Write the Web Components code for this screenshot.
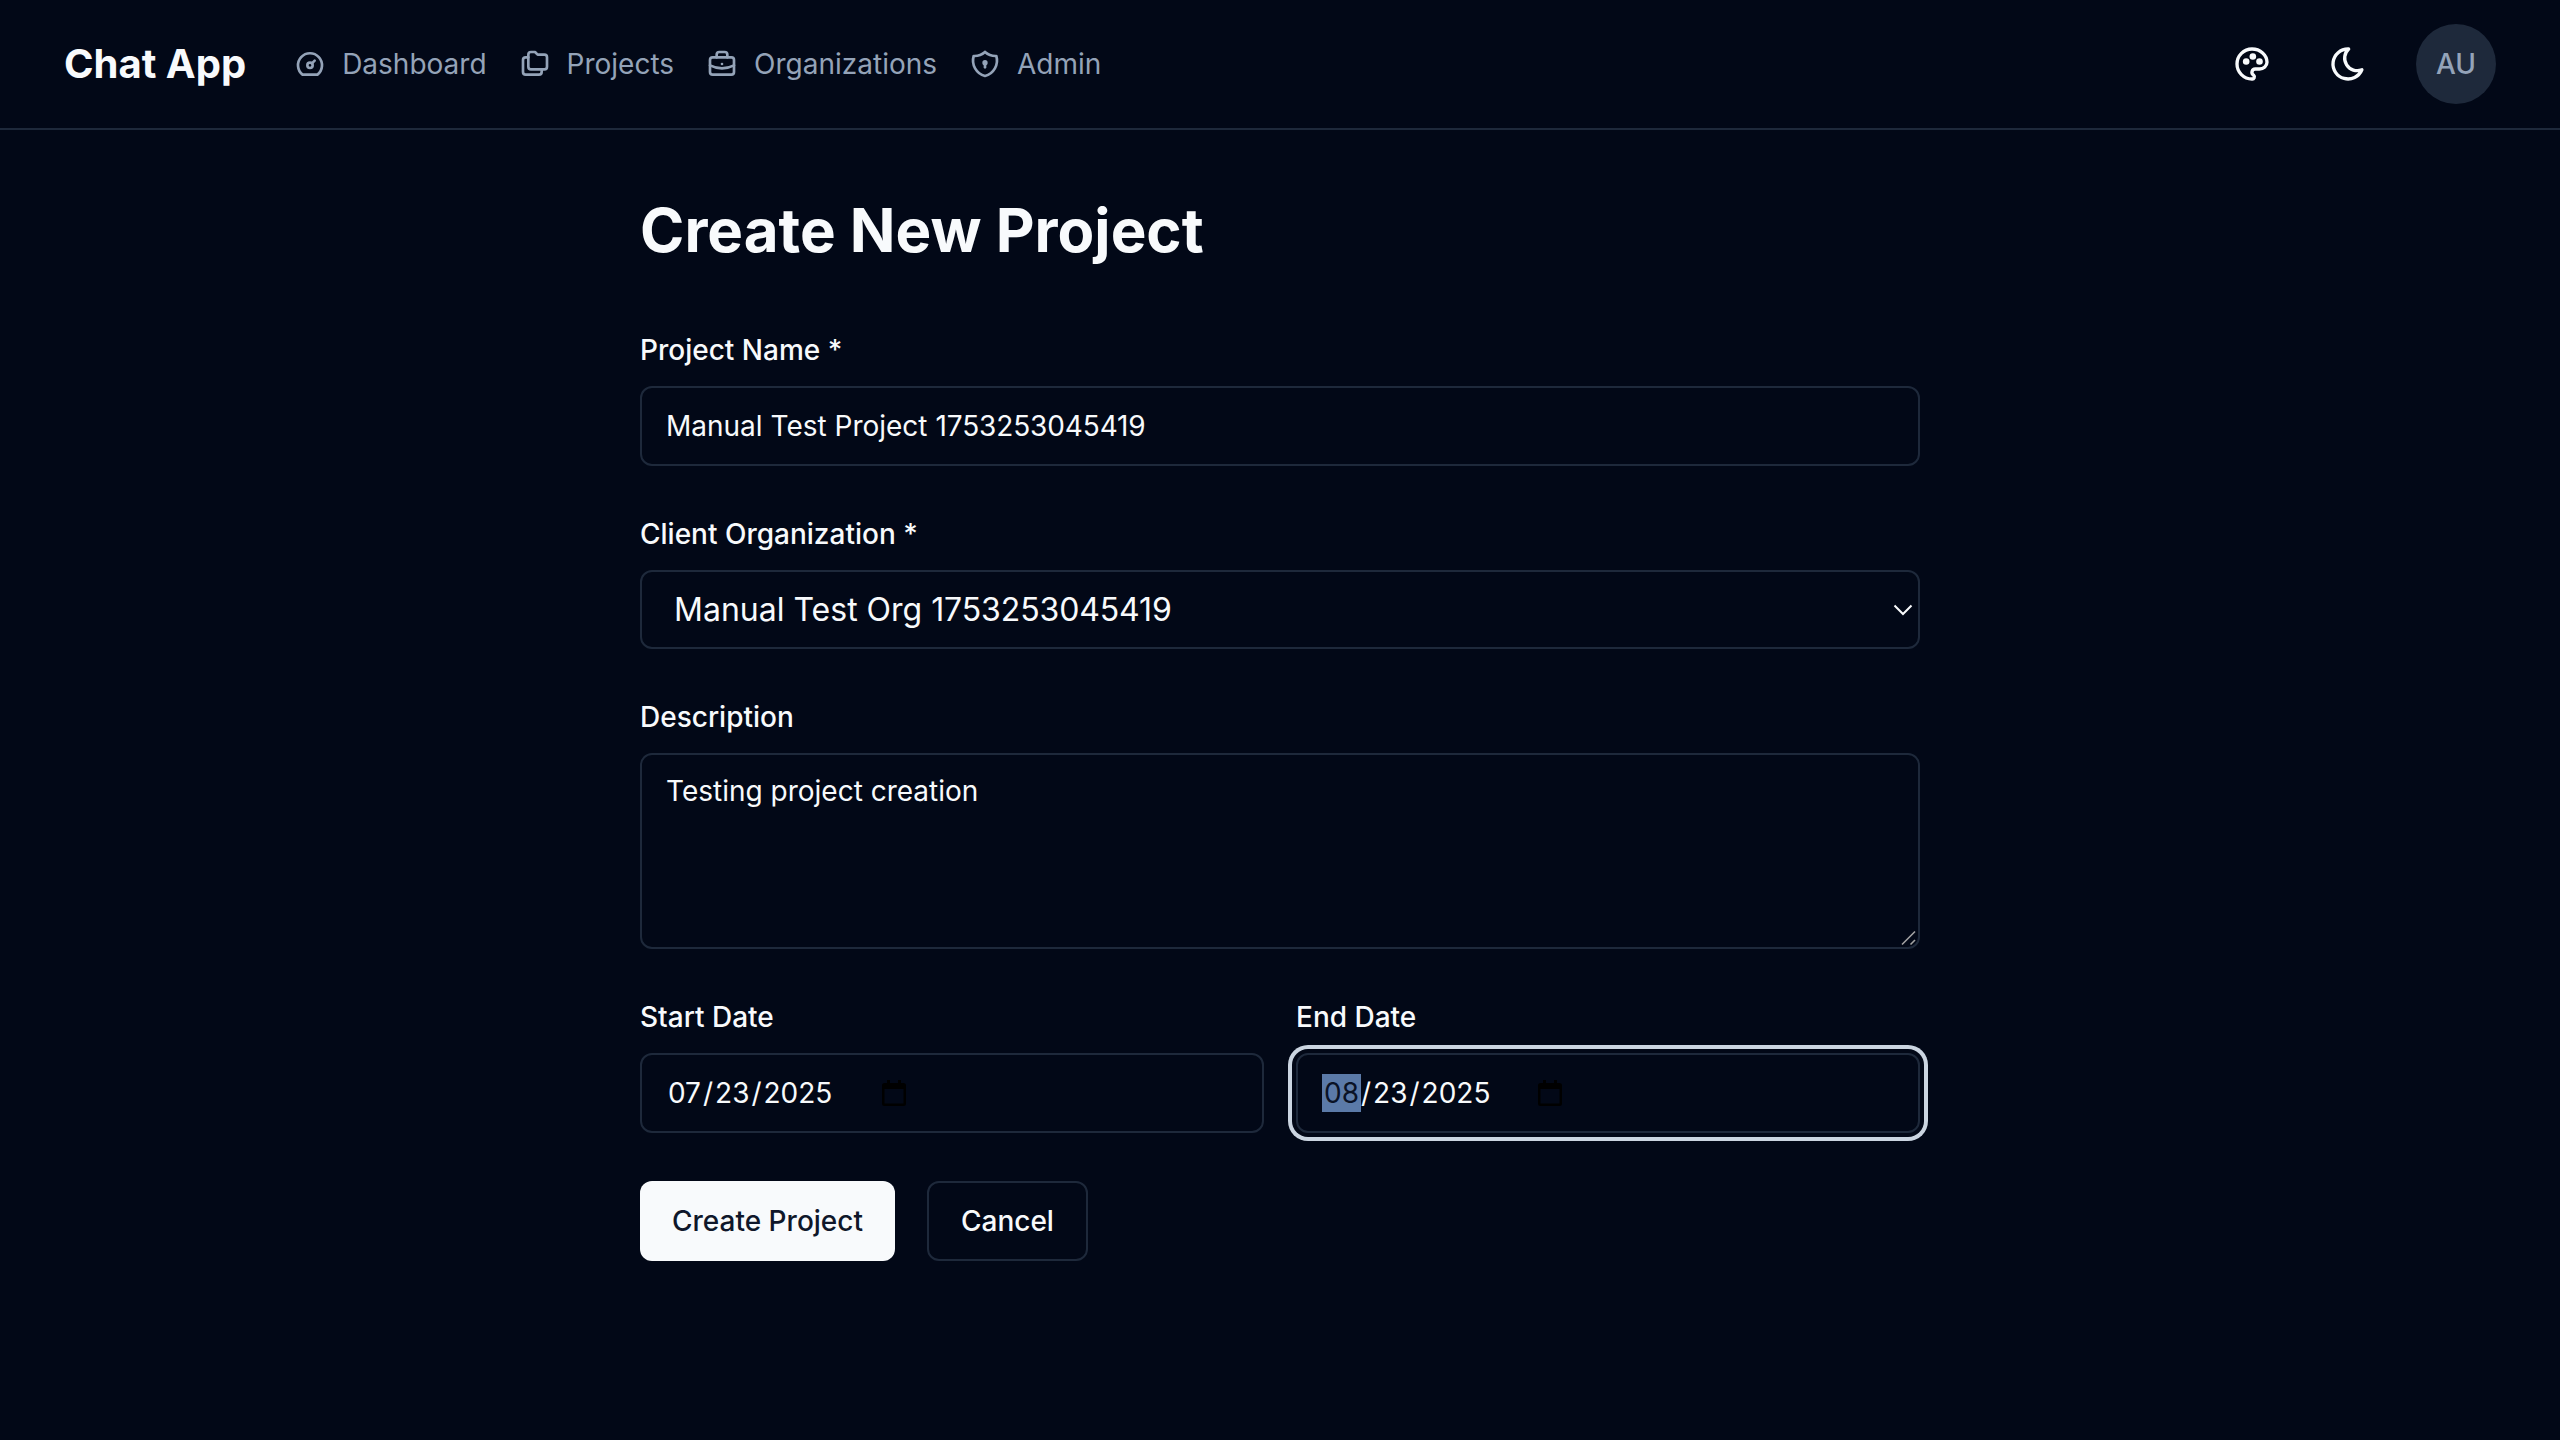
<!DOCTYPE html>
<html lang="en">
<head>
<meta charset="utf-8">
<title>Create New Project</title>
<style>
html,body{margin:0;padding:0;background:#020817;}
body{font-family:Inter,"Liberation Sans",sans-serif;color:#f8fafc;min-height:100vh;}
</style>
</head>
<body>
<chat-app>
  <app-header slot="header">
    <span slot="brand">Chat App</span>
    <nav-link icon="dashboard">Dashboard</nav-link>
    <nav-link icon="folders">Projects</nav-link>
    <nav-link icon="briefcase">Organizations</nav-link>
    <nav-link icon="shield">Admin</nav-link>
    <icon-button slot="tools" icon="palette"></icon-button>
    <icon-button slot="tools" icon="moon"></icon-button>
    <user-avatar slot="tools">AU</user-avatar>
  </app-header>
  <project-form>
    <form-field label="Project Name *"><text-box>Manual Test Project <span class="num">1753253045419</span></text-box></form-field>
    <form-field label="Client Organization *"><select-box><span>Manual Test Org <span style="letter-spacing:-.12px">1753253045419</span></span></select-box></form-field>
    <form-field label="Description"><area-box>Testing project creation</area-box></form-field>
    <date-row>
      <form-field label="Start Date"><date-box><span class="seg">07</span>/<span class="seg">23</span>/<span class="seg">2025</span></date-box></form-field>
      <form-field label="End Date"><date-box focused><span class="seg sel">08</span>/<span class="seg">23</span>/<span class="seg">2025</span></date-box></form-field>
    </date-row>
    <action-row>
      <action-button primary>Create Project</action-button>
      <action-button>Cancel</action-button>
    </action-row>
  </project-form>
</chat-app>
<script>
const ICONS={
 dashboard:'<path d="M10 13a2 2 0 1 0 4 0a2 2 0 1 0 -4 0"/><path d="M13.45 11.55l2.05 -2.05"/><path d="M6.4 20a9 9 0 1 1 11.2 0z"/>',
 folders:'<path d="M9 3h3l2 2h5a2 2 0 0 1 2 2v7a2 2 0 0 1 -2 2h-10a2 2 0 0 1 -2 -2v-9a2 2 0 0 1 2 -2"/><path d="M17 16v2a2 2 0 0 1 -2 2h-10a2 2 0 0 1 -2 -2v-9a2 2 0 0 1 2 -2h2"/>',
 briefcase:'<path d="M3 9a2 2 0 0 1 2 -2h14a2 2 0 0 1 2 2v9a2 2 0 0 1 -2 2h-14a2 2 0 0 1 -2 -2z"/><path d="M8 7v-2a2 2 0 0 1 2 -2h4a2 2 0 0 1 2 2v2"/><path d="M12 12v.01"/><path d="M3 13a20 20 0 0 0 18 0"/>',
 shield:'<path d="M12 3a12 12 0 0 0 8.5 3a12 12 0 0 1 -8.500 15a12 12 0 0 1 -8.500 -15a12 12 0 0 0 8.500 -3"/><path d="M11 11a1 1 0 1 0 2 0a1 1 0 1 0 -2 0"/><path d="M12 12v2.5"/>',
 palette:'<path d="M12 21a9 9 0 0 1 0 -18c4.97 0 9 3.582 9 8c0 1.06 -.474 2.078 -1.318 2.828c-.844 .75 -1.989 1.172 -3.182 1.172h-2.5a2 2 0 0 0 -1 3.75a1.3 1.3 0 0 1 -1 2.25"/><path d="M7.5 10.5a1 1 0 1 0 2 0a1 1 0 1 0 -2 0"/><path d="M11.5 7.5a1 1 0 1 0 2 0a1 1 0 1 0 -2 0"/><path d="M15.5 10.5a1 1 0 1 0 2 0a1 1 0 1 0 -2 0"/>',
 moon:'<path d="M12 3c.132 0 .263 0 .393 0a7.5 7.5 0 0 0 7.92 12.446a9 9 0 1 1 -8.313 -12.454z"/>'
};
function def(name,css,html){
  customElements.define(name,class extends HTMLElement{
    constructor(){super();const r=this.attachShadow({mode:'open'});
      r.innerHTML='<style>'+css+'</style>'+(typeof html==='function'?html(this):html);
    }
  });
}
const svg=(n,s)=>`<svg width="${s}" height="${s}" viewBox="0 0 24 24" fill="none" stroke="currentColor" stroke-width="2" stroke-linecap="round" stroke-linejoin="round" aria-hidden="true">${ICONS[n]}</svg>`;

def('chat-app',':host{display:block}','<slot name="header"></slot><slot></slot>');

def('app-header',`
:host{display:flex;align-items:center;height:128px;padding:0 64px;border-bottom:2px solid #1e293b;}
.brand{font-size:40px;line-height:56px;font-weight:700;color:#f8fafc;margin-right:48px;white-space:nowrap}
.nav{display:flex;align-items:center;gap:32px}
.tools{display:flex;align-items:center;margin-left:auto}
`,`<div class="brand"><slot name="brand"></slot></div><div class="nav"><slot></slot></div><div class="tools"><slot name="tools"></slot></div>`);

def('nav-link',`
:host{display:flex;align-items:center;gap:16px;color:#94a3b8;font-size:28px;line-height:40px;white-space:nowrap}
svg{display:block;flex:none}
`,el=>svg(el.getAttribute('icon'),32)+'<slot></slot>');

def('icon-button',`
:host{display:flex;align-items:center;justify-content:center;width:80px;height:80px;color:#f8fafc;margin-right:16px}
:host(:nth-of-type(2)){margin-right:28px}
svg{display:block}
`,el=>svg(el.getAttribute('icon'),40));

def('user-avatar',`
:host{display:flex;align-items:center;justify-content:center;width:80px;height:80px;border-radius:50%;background:#1e293b;color:#94a3b8;font-size:28px;font-weight:500;line-height:40px}
`,'<slot></slot>');

def('project-form',`
:host{display:flex;flex-direction:column;gap:48px;width:1280px;margin:0 auto;padding:64px 0;}
h1{margin:0 0 16px;font-size:60px;line-height:72px;font-weight:700;color:#f8fafc}
`,'<h1>Create New Project</h1><slot></slot>');

def('form-field',`
:host{display:flex;flex-direction:column;gap:16px;min-width:0}
label{display:block;font-size:28px;line-height:40px;font-weight:500;color:#f8fafc}
`,el=>`<label>${el.getAttribute('label')}</label><slot></slot>`);

const boxCss=`box-sizing:border-box;border:2px solid #1e293b;border-radius:12px;color:#f8fafc;background:#020817;`;

def('text-box',`
:host{display:block;${boxCss}height:80px;padding:18px 24px;font-size:28px;line-height:40px;white-space:nowrap}
::slotted(.num){letter-spacing:-.12px}
`,'<slot></slot>');

def('select-box',`
:host{display:flex;align-items:center;justify-content:space-between;${boxCss}height:79px;padding:0 5px 0 32px;font-size:32px;line-height:40px;white-space:nowrap}
svg{display:block;flex:none}
`,'<slot></slot><svg width="20" height="12" viewBox="0 0 20 12" fill="none" stroke="#f8fafc" stroke-width="2"><path d="M1.5 1.5 L10 10 L18.5 1.5"/></svg>');

def('area-box',`
:host{display:block;position:relative;${boxCss}height:196px;padding:16px 24px;font-size:28px;line-height:40px}
svg{position:absolute;right:1px;bottom:1px;display:block}
`,'<slot></slot><svg width="16" height="16" viewBox="0 0 16 16" fill="none" stroke="#a3a3a3" stroke-width="1.6"><path d="M1 14.5 L14 1.5"/><path d="M9.5 14.5 L14 10"/></svg>');

def('date-row',`
:host{display:grid;grid-template-columns:1fr 1fr;gap:32px}
`,'<slot></slot>');

def('date-box',`
:host{display:flex;align-items:center;${boxCss}height:80px;padding:0 0 0 24px;font-size:28px;line-height:38px;white-space:nowrap}
:host([focused]){box-shadow:0 0 0 4px #020817,0 0 0 8px #cbd5e1}
.val{display:block;width:216px;flex:none}
svg{display:block;flex:none}
::slotted(.seg){display:inline-block;padding:0 2px}
::slotted(.sel){background:#5b7aa8;color:#0a1226}
`,'<div class="val"><slot></slot></div><svg width="24" height="26" viewBox="0 0 24 26" fill="#000"><path fill-rule="evenodd" d="M5 0h3v3h8V0h3v3h2.5A2.5 2.5 0 0 1 24 5.500V23.500A2.500 2.500 0 0 1 21.500 26H2.500A2.500 2.500 0 0 1 0 23.500V5.500A2.500 2.500 0 0 1 2.500 3H5zM2.500 9v14.500h19V9z"/></svg>');

def('action-row',`
:host{display:flex;gap:32px}
`,'<slot></slot>');

def('action-button',`
:host{display:flex;align-items:center;justify-content:center;box-sizing:border-box;height:80px;padding:0 32px;border-radius:12px;border:2px solid #1e293b;color:#f8fafc;background:#020817;font-size:28px;line-height:40px;font-weight:500;white-space:nowrap}
:host([primary]){background:#f8fafc;border:none;color:#0f172a}
`,'<slot></slot>');
</script>
</body>
</html>
